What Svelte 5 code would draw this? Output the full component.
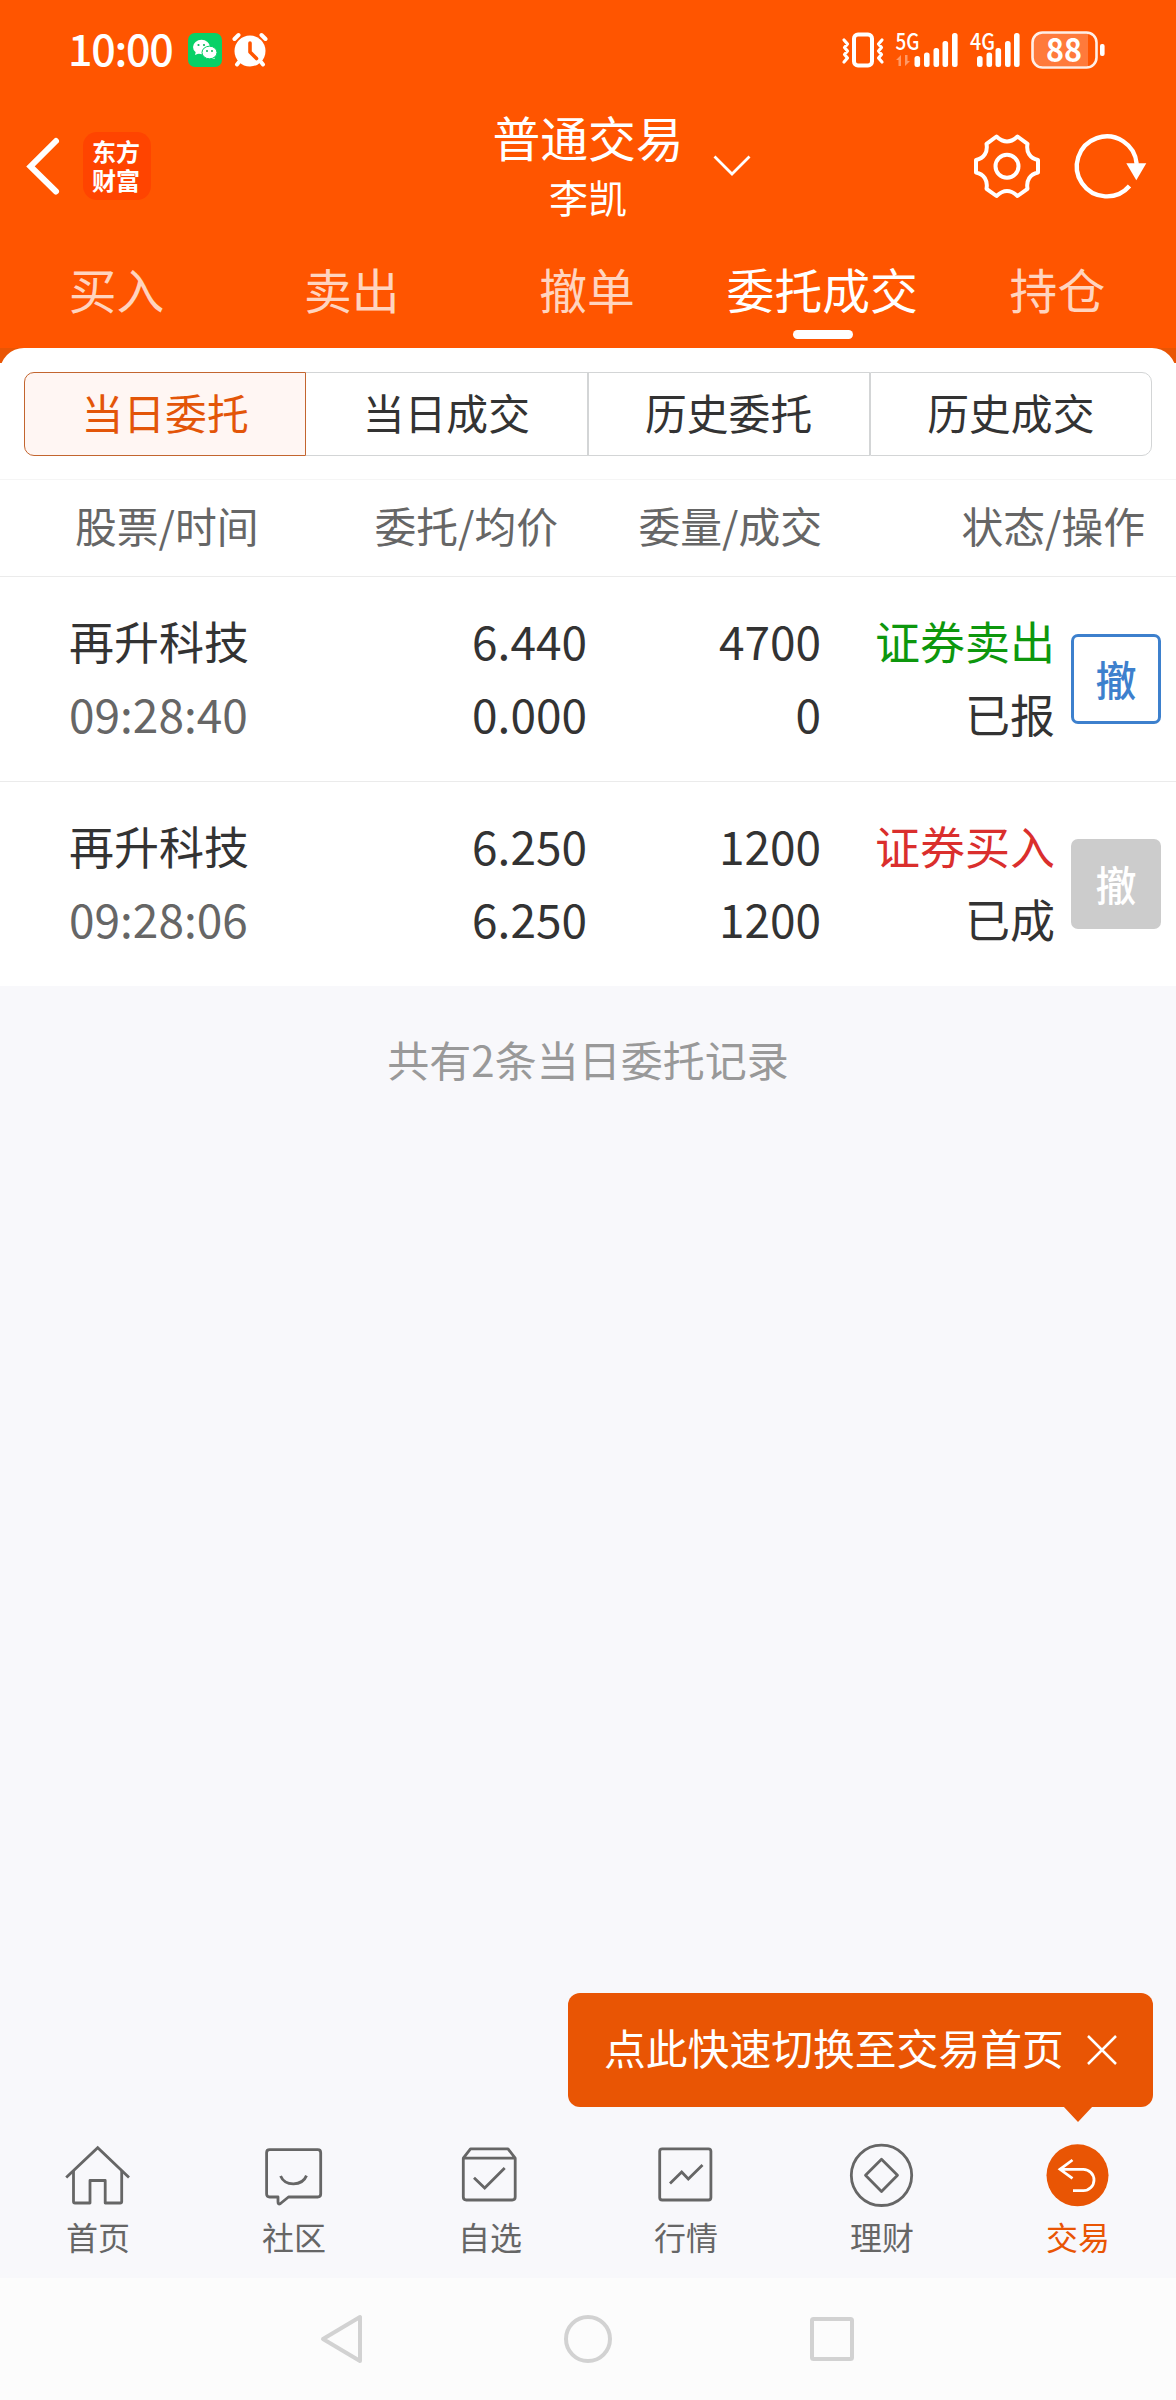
<script>
  const tabs = ["买入", "卖出", "撤单", "委托成交", "持仓"];
  const segments = ["当日委托", "当日成交", "历史委托", "历史成交"];
  const columns = ["股票/时间", "委托/均价", "委量/成交", "状态/操作"];
  const navItems = ["首页", "社区", "自选", "行情", "理财", "交易"];

  const orders = [
    { name: "再升科技", time: "09:28:40", price: "6.440", avg: "0.000", amount: 4700, filled: 0, side: "sell", type: "证券卖出", status: "已报", open: true },
    { name: "再升科技", time: "09:28:06", price: "6.250", avg: "6.250", amount: 1200, filled: 1200, side: "buy", type: "证券买入", status: "已成", open: false },
  ];

  let activeTab = $state(3);
  let activeSegment = $state(0);
  let activeNav = $state(5);
  let showTip = $state(true);
</script>

<div class="screen">
  <header>
    <div class="status-bar">
      <span class="clock">10:00</span>
      <svg class="wechat" width="34" height="34" viewBox="0 0 34 34">
        <rect width="34" height="34" rx="7" fill="#07d167" />
        <ellipse cx="13.5" cy="14" rx="8.5" ry="7.2" fill="#fff" />
        <path d="M8 18l-1 4 5-2zM25 23l2 3-5-1z" fill="#fff" />
        <ellipse cx="21.5" cy="19.5" rx="7.5" ry="6.3" fill="#fff" stroke="#07d167" stroke-width="1" />
        <g fill="#07b95a">
          <circle cx="10.5" cy="12" r="1.1" /><circle cx="16" cy="12" r="1.1" />
          <circle cx="19" cy="18" r="1" /><circle cx="24" cy="18" r="1" />
        </g>
      </svg>
      <svg class="alarm" width="36" height="36" viewBox="0 0 36 36" stroke-linecap="round" stroke-linejoin="round" fill="none">
        <circle cx="18" cy="19" r="15.5" fill="#fff" />
        <path d="M2.500 7l4-4M33.500 7l-4-4" stroke="#fff" stroke-width="4" />
        <path d="M7 30l-2 2.500M29 30l2 2.500" stroke="#fff" stroke-width="4" />
        <path d="M18 11v9l6.500 6.500" stroke="#ff5500" stroke-width="3.6" />
      </svg>
      <div class="signals">
        <svg width="42" height="36" viewBox="0 0 42 36" fill="none" stroke="#fff" stroke-linejoin="round" stroke-linecap="round">
          <rect x="12" y="2.500" width="18" height="31" rx="4" stroke-width="4" />
          <path d="M2 8l3.500 4-3 3.500 3 3.500-3 3.500 3 3.500-3.500 4M40 8l-3.500 4 3 3.500-3 3.500 3 3.500-3 3.500 3.500 4" stroke-width="3.2" />
        </svg>
        <svg class="five" width="62" height="36" viewBox="0 0 62 36" fill="#fff">
          <text x="-0.5" y="17.5" textLength="24" lengthAdjust="spacingAndGlyphs">5G</text>
          <path d="M0 28l5-5v11h-2.500v-6zM9 23v11l5-5h-2.500v-6z" opacity=".4" />
          <rect x="18.5" y="24" width="5.6" height="11" rx="2.5" />
          <rect x="28" y="20.5" width="5.6" height="14.5" rx="2.5" />
          <rect x="37.5" y="16" width="5.6" height="19" rx="2.5" />
          <rect x="46.5" y="9" width="5.6" height="26" rx="2.5" />
          <rect x="56" y="1" width="5.6" height="34" rx="2.5" />
        </svg>
        <svg class="four" width="50" height="36" viewBox="0 0 50 36" fill="#fff">
          <text x="0" y="17.5" textLength="25" lengthAdjust="spacingAndGlyphs">4G</text>
          <rect x="7" y="24" width="5.6" height="11" rx="2.5" />
          <rect x="16.5" y="20.5" width="5.6" height="14.5" rx="2.5" />
          <rect x="25.5" y="16" width="5.6" height="19" rx="2.5" />
          <rect x="35" y="9" width="5.6" height="26" rx="2.5" />
          <rect x="44" y="1" width="5.6" height="34" rx="2.5" />
        </svg>
        <svg class="battery" width="74" height="38" viewBox="0 0 74 38">
          <path d="M11 2H57V35H11Q2 35 2 26V11Q2 2 11 2z" fill="#ff7a3b" />
          <rect x="1.5" y="1.5" width="64" height="35" rx="10" fill="none" stroke="#fff" stroke-opacity=".9" stroke-width="2.6" />
          <rect x="69" y="13" width="4.6" height="12" rx="2" fill="#fff" />
          <text x="15" y="31" textLength="36" lengthAdjust="spacingAndGlyphs" fill="#fff">88</text>
        </svg>
      </div>
    </div>

    <div class="title-bar">
      <div class="left">
        <svg width="34" height="58" viewBox="0 0 34 58" fill="none" stroke="#fff" stroke-width="6">
          <path d="M30 4L4.500 29.500 30 54.500" stroke-linecap="round" />
        </svg>
        <div class="logo"><span>东方</span><span>财富</span></div>
      </div>
      <div class="account">
        <h1>普通交易</h1>
        <p>李凯</p>
        <svg class="chevron" width="38" height="22" viewBox="0 0 38 22" fill="none" stroke="#fff" stroke-width="2.8">
          <path d="M1.500 1.500L19 19 36.500 1.500" />
        </svg>
      </div>
      <div class="actions">
        <svg width="68" height="68" viewBox="0 0 68 68" fill="none" stroke="#fff" stroke-width="4" stroke-linejoin="round">
          <path d="M13.500 11.800L23.500 4.500Q34 14.500 44.500 4.500L54.500 11.800C53 20 57 26.500 65 28V40.500C57 42 53 48.500 54.500 56.800L44.500 64Q34 54 23.500 64L13.500 56.800C15 48.500 11 42 3 40.500V28C11 26.500 15 20 13.500 11.800Z" />
          <circle cx="34" cy="34.2" r="11.5" />
        </svg>
        <svg width="74" height="68" viewBox="0 0 74 68">
          <path d="M56.500 54A30 30 0 1 1 63.700 32" fill="none" stroke="#fff" stroke-width="4.4" />
          <path d="M53.300 31.300h20l-10 17z" fill="#fff" />
        </svg>
      </div>
    </div>

    <nav class="tabs">
      {#each tabs as tab, i}
        <button class:active={activeTab === i} onclick={() => (activeTab = i)}>{tab}</button>
      {/each}
    </nav>
  </header>

  <div class="panel-wrap">
    <section class="panel">
      <div class="segments">
        {#each segments as segment, i}
          <button class:active={activeSegment === i} onclick={() => (activeSegment = i)}>{segment}</button>
        {/each}
      </div>

      <div class="table-head">
        {#each columns as column}
          <span>{column}</span>
        {/each}
      </div>

      {#each orders as order}
        <div class="order">
          <div class="cell">
            <span>{order.name}</span>
            <span class="time">{order.time}</span>
          </div>
          <div class="cell num">
            <span>{order.price}</span>
            <span>{order.avg}</span>
          </div>
          <div class="cell num">
            <span>{order.amount}</span>
            <span>{order.filled}</span>
          </div>
          <div class="cell">
            <span class={order.side}>{order.type}</span>
            <span>{order.status}</span>
          </div>
          <button class="cancel" disabled={!order.open}>撤</button>
        </div>
      {/each}
    </section>
  </div>

  <main>
    <p class="summary">共有{orders.length}条当日委托记录</p>
  </main>

  <nav class="bottom-nav">
    {#each navItems as item, i}
      <button class:active={activeNav === i} onclick={() => (activeNav = i)}>
        <svg width="66" height="66" viewBox="0 0 66 66" fill="none" stroke="currentColor" stroke-width="2.8" stroke-linejoin="round">
          {#if i === 0}
            <path d="M1.200 34.500L32.700 4.800 64 34.500" stroke-linejoin="miter" />
            <path d="M8.500 28V58.500Q8.500 60 10 60H25V37.500H40.200V60H55.200Q56.700 60 56.700 58.500V28" />
          {:else if i === 1}
            <path d="M8.600 6.700H56.700Q59.700 6.700 59.700 9.700V51Q59.700 54 56.700 54H27.500L19.500 60.500Q17 62 17 59V54H8.600Q5.600 54 5.600 51V9.700Q5.600 6.700 8.600 6.700Z" />
            <path d="M19.600 33C24 43.500 41 43.500 45.500 32.600" />
          {:else if i === 2}
            <path d="M6.300 15.200H58.200V54Q58.200 57 55.200 57H9.300Q6.300 57 6.300 54ZM6.300 15.200L13.500 5.800H51L58.200 15.200" />
            <path d="M17 34.700L27.700 45 47.700 25" stroke-linejoin="miter" />
          {:else if i === 3}
            <rect x="6.7" y="5.8" width="51.2" height="51.2" rx="2.5" />
            <path d="M17 40.500L28.700 29 35.300 36 49.500 22" stroke-linejoin="miter" />
          {:else if i === 4}
            <circle cx="32.500" cy="32.3" r="30.2" />
            <path d="M32.500 16.200L48.500 32.300 32.500 48.500 16.500 32.300Z" />
          {:else}
            <circle cx="32.500" cy="32.3" r="31" fill="currentColor" stroke="none" />
            <path d="M27.500 17L15 26.300 27.500 35.300M15 26.300H38.300A10.700 10.700 0 0 1 38.300 47.700H28" stroke="#fff" stroke-linejoin="miter" />
          {/if}
        </svg>
        <span>{item}</span>
      </button>
    {/each}
    {#if showTip}
      <div class="tip">
        <span>点此快速切换至交易首页</span>
        <button aria-label="关闭" onclick={() => (showTip = false)}>
          <svg width="30" height="30" viewBox="0 0 30 30" stroke="#fff" stroke-width="2.5"><path d="M1 1l28 28M29 1L1 29" /></svg>
        </button>
      </div>
    {/if}
  </nav>

  <div class="system-nav">
    <svg width="534" height="50" viewBox="0 0 534 50" fill="none" stroke="#d2d2d2" stroke-width="4" stroke-linejoin="round">
      <path d="M39 3V47L2 25Z" />
      <circle cx="267" cy="25" r="22" />
      <rect x="491" y="5" width="40" height="40" rx="1.5" />
    </svg>
  </div>
</div>

<style>
  :global(body) {
    background: #f8f8fb;
  }

  .screen {
    width: 1176px;
    height: 2400px;
    display: flex;
    flex-direction: column;
    background: #f8f8fb;
    color: #333;
    font-family: "Noto Sans CJK SC", sans-serif;
    overflow: hidden;
  }

  button {
    background: none;
    border: none;
    padding: 0;
    margin: 0;
    font-family: inherit;
    color: inherit;
    cursor: pointer;
  }
  h1, p { margin: 0; font-weight: 400; }
  svg { display: block; flex-shrink: 0; overflow: visible; }

  header {
    height: 348px;
    background: #ff5500;
    color: #fff;
    flex-shrink: 0;
  }

  .status-bar {
    height: 100px;
    padding: 0 71px 0 68px;
    display: flex;
    align-items: center;
  }
  .clock {
    width: 120px;
    padding-bottom: 5px;
    font-size: 43px;
    font-weight: 500;
    line-height: 95px;
    white-space: nowrap;
    letter-spacing: -1.3px;
  }
  .alarm { margin-left: 10px; }
  .signals {
    margin-left: auto;
    display: flex;
    align-items: center;
  }
  .five, .four { margin-left: 12px; }
  .five text, .four text { font-size: 23px; font-weight: 500; }
  .battery { margin-left: 11px; }
  .battery text { font-size: 33px; font-weight: 700; }

  .title-bar {
    height: 132px;
    display: grid;
    grid-template-columns: 1fr auto 1fr;
    align-items: center;
  }
  .left {
    display: flex;
    align-items: center;
    padding-left: 26px;
    gap: 23px;
  }
  .logo {
    box-sizing: border-box;
    width: 68px;
    height: 68px;
    padding: 0 2px 3px 0;
    border-radius: 14px;
    background: #ff4400;
    display: flex;
    flex-direction: column;
    align-items: center;
    justify-content: center;
    font-size: 24px;
    font-weight: 700;
    line-height: 29px;
  }
  .account {
    position: relative;
    text-align: center;
  }
  .account h1 { font-size: 47.8px; line-height: 61px; }
  .account p { font-size: 39px; line-height: 58px; padding-bottom: 1px; }
  .chevron {
    position: absolute;
    left: 221px;
    top: 49px;
  }
  .actions {
    display: flex;
    justify-content: flex-end;
    gap: 32px;
    padding-right: 29px;
  }

  .tabs {
    display: flex;
    height: 116px;
  }
  .tabs button {
    flex: 1 1 0;
    position: relative;
    padding: 0 2px 3px 0;
    font-size: 47.8px;
    line-height: 113px;
    color: rgba(255, 255, 255, 0.75);
    white-space: nowrap;
  }
  .tabs .active { color: #fff; }
  .tabs .active::after {
    content: "";
    position: absolute;
    left: 50%;
    bottom: 9px;
    width: 60px;
    height: 9px;
    margin-left: -30px;
    border-radius: 5px;
    background: #fff;
  }

  .panel-wrap {
    background: linear-gradient(#e95504 15px, #fff 15px);
    flex-shrink: 0;
  }
  .panel {
    background: #fff;
    border-radius: 24px 24px 0 0;
    padding-top: 24px;
  }

  .segments {
    display: flex;
    margin: 0 24px;
    height: 84px;
  }
  .segments button {
    flex: 1 1 0;
    box-sizing: border-box;
    border: 1px solid #d3d5d6;
    padding-bottom: 3px;
    font-size: 41.8px;
    line-height: 79px;
  }
  .segments button:first-child { border-radius: 10px 0 0 10px; }
  .segments button:last-child { border-radius: 0 10px 10px 0; }
  .segments .active {
    background: #fff6f3;
    border-color: #c3652f;
    color: #e35508;
  }
  .segments .active + button { border-left: none; }

  .table-head {
    display: grid;
    grid-template-columns: 248px 235px 264px 323px;
    padding: 0 31px 0 75px;
    margin-top: 23px;
    border-top: 1px solid #f5f5f5;
    border-bottom: 1px solid #ebebeb;
    height: 96px;
    font-size: 41.8px;
    line-height: 91px;
    color: #666;
    text-align: right;
  }
  .table-head span:first-child { text-align: left; }

  .order {
    box-sizing: border-box;
    display: grid;
    grid-template-columns: 281px 237px 234px 234px 106px;
    align-items: center;
    padding: 0 15px 0 69px;
    height: 205px;
    border-bottom: 1px solid #ebebeb;
  }
  .order:last-child { height: 204px; border-bottom: none; }
  .cell {
    display: flex;
    flex-direction: column;
    padding-bottom: 4px;
    font-size: 45px;
    line-height: 73px;
    text-align: right;
  }
  .cell:first-child { text-align: left; }
  .num { font-size: 46px; }
  .time { font-size: 46px; color: #666; }
  .sell { color: #0d970d; }
  .buy { color: #da2f2d; }

  .cancel {
    justify-self: end;
    box-sizing: border-box;
    width: 90px;
    height: 90px;
    border: 3px solid #3d80cd;
    border-radius: 7px;
    padding-bottom: 3px;
    color: #3d80cd;
    font-size: 41px;
    font-weight: 500;
    line-height: 78px;
  }
  .cancel:disabled {
    background: #ccc;
    border-color: #ccc;
    color: #fff;
    cursor: default;
  }

  main {
    flex: 1;
  }
  .summary {
    margin-top: 28px;
    font-size: 42px;
    line-height: 90px;
    text-align: center;
    color: #999;
  }

  .bottom-nav {
    position: relative;
    display: flex;
    height: 155px;
    flex-shrink: 0;
  }
  .bottom-nav > button {
    flex: 1 1 0;
    display: flex;
    flex-direction: column;
    align-items: center;
    padding-top: 20px;
    color: #666;
    font-size: 32px;
    line-height: 54px;
  }
  .bottom-nav > .active { color: #e95504; }

  .tip {
    position: absolute;
    right: 23px;
    bottom: 171px;
    box-sizing: border-box;
    width: 585px;
    height: 114px;
    padding: 0 36px;
    border-radius: 12px;
    background: #e95504;
    color: #fff;
    display: flex;
    align-items: center;
    justify-content: space-between;
    font-size: 41.8px;
    white-space: nowrap;
  }
  .tip span {
    padding-bottom: 6px;
    line-height: 108px;
  }
  .tip::after {
    content: "";
    position: absolute;
    right: 60px;
    top: 113px;
    border: 15px solid transparent;
    border-top: 16px solid #e95504;
    border-bottom: none;
  }

  .system-nav {
    height: 122px;
    background: #fcfcfc;
    display: flex;
    align-items: center;
    justify-content: center;
    flex-shrink: 0;
  }
</style>
